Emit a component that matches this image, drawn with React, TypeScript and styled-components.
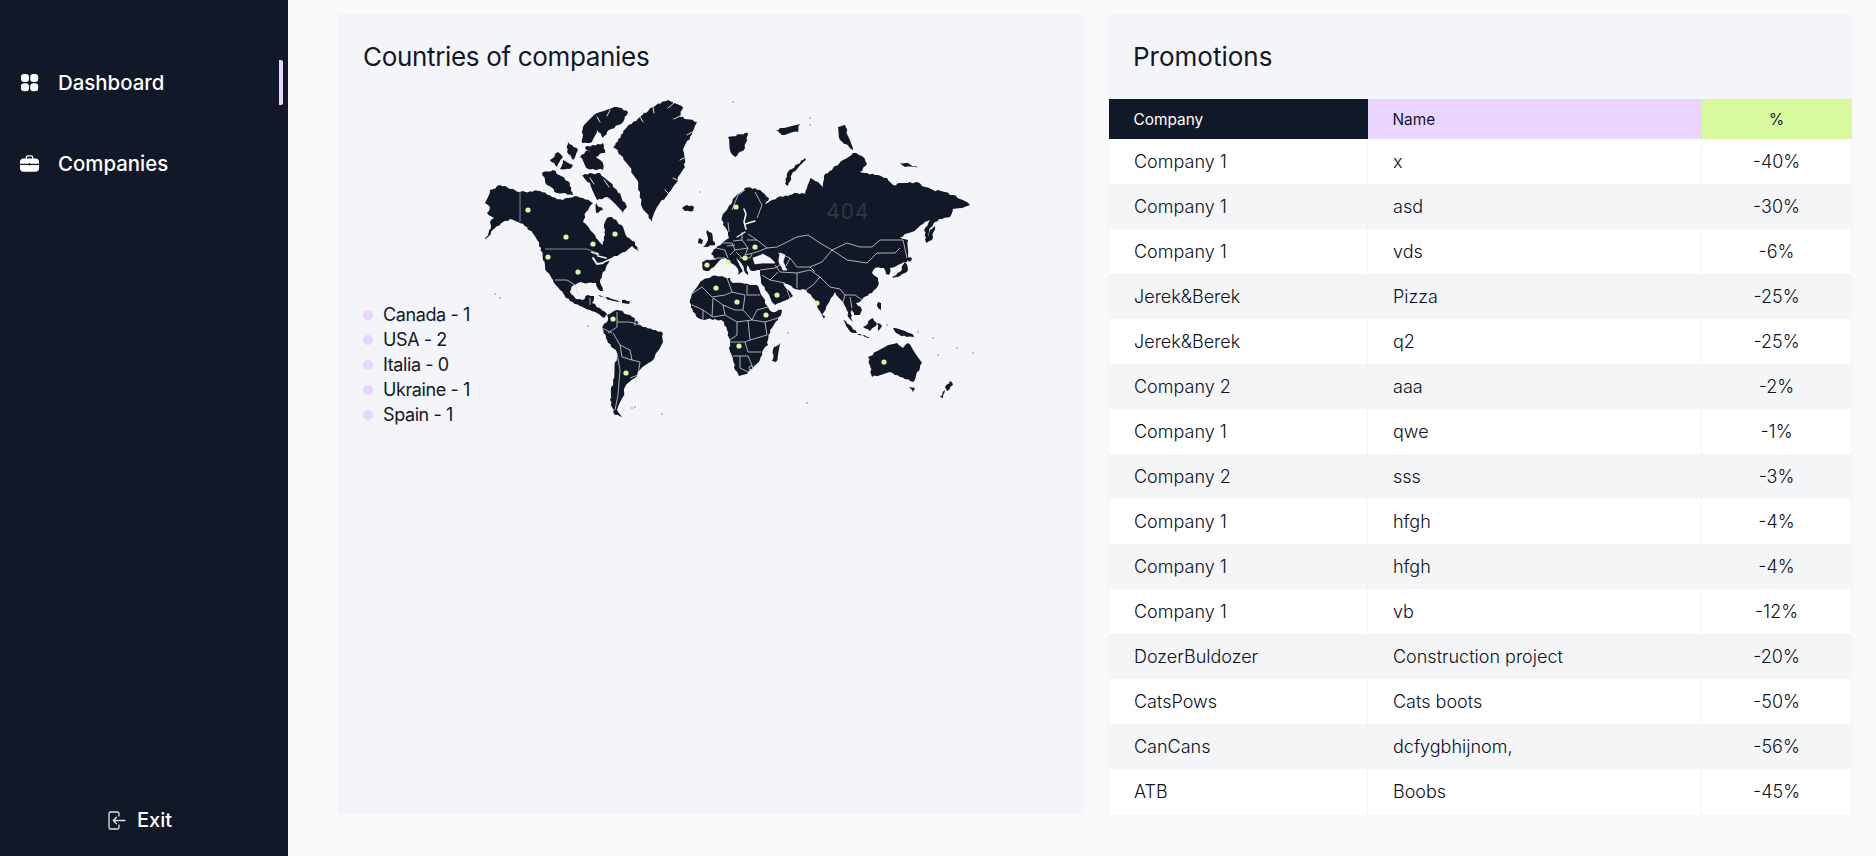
import React from 'react';
import styled, { createGlobalStyle } from 'styled-components';

type Pt = [number, number];

const GlobalStyle = createGlobalStyle`
  html, body { margin: 0; padding: 0; height: 100%; overflow: hidden; background: #fafafb; }
  * { box-sizing: border-box; }
  body { font-family: Inter, "Liberation Sans", sans-serif; color: #111827; }
`;

const Page = styled.div`
  display: flex;
  width: 1876px;
  height: 856px;
`;

const Sidebar = styled.aside`
  width: 288px;
  height: 100%;
  flex-shrink: 0;
  background: #111827;
  color: #fff;
  display: flex;
  flex-direction: column;
  padding: 60px 5px 0 0;
`;

const NavItem = styled.a<{ $active?: boolean }>`
  height: 45px;
  margin-bottom: 36px;
  display: flex;
  align-items: center;
  gap: 19px;
  padding-left: 20px;
  font-size: 20.4px;
  font-weight: 450;
  border-right: 4px solid ${(p) => (p.$active ? '#e9d5ff' : 'transparent')};
  border-radius: 2px;
`;

const ExitLink = styled.a`
  margin-top: auto;
  margin-bottom: 24px;
  padding-left: 108px;
  display: flex;
  align-items: center;
  gap: 11px;
  font-size: 20px;
  font-weight: 450;
`;

const Content = styled.main`
  flex: 1;
  display: grid;
  grid-template-columns: 746px 744px;
  gap: 24px;
  padding: 14px 24px 0 50px;
  height: 814px;
`;

const Card = styled.section`
  background: #f3f5f8;
  min-width: 0;
`;

const Title = styled.h2<{ $tight?: boolean }>`
  margin: 0;
  height: 85px;
  padding: 26px 0 0 25px;
  font-size: 26px;
  line-height: 34px;
  font-weight: 400;
  letter-spacing: ${(p) => (p.$tight ? '-0.33px' : '0')};
  color: #111827;
`;

const MapRow = styled.div`
  display: flex;
  align-items: flex-start;
  padding-left: 25px;
`;

const Legend = styled.ul`
  list-style: none;
  margin: 203px 0 0;
  padding: 0;
  width: 121px;
  flex-shrink: 0;
`;

const LegendItem = styled.li`
  height: 25px;
  display: flex;
  align-items: center;
  gap: 10px;
  font-size: 18px;
  font-weight: 400;
  letter-spacing: -0.4px;
  white-space: nowrap;
  &::before {
    content: '';
    width: 10px;
    height: 10px;
    border-radius: 50%;
    background: #e9d5ff;
  }
`;

const MapSvg = styled.svg`
  width: 500px;
  height: 340px;
  margin-top: -9px;
  flex-shrink: 0;
  overflow: visible;
`;

const Table = styled.table`
  width: 100%;
  border-collapse: collapse;
  table-layout: fixed;
`;

const HeadCell = styled.th<{ $bg: string; $fg: string; $center?: boolean }>`
  height: 40px;
  padding: 0 0 0 ${(p) => (p.$center ? 0 : 25)}px;
  background: ${(p) => p.$bg};
  color: ${(p) => p.$fg};
  font-size: 15.4px;
  font-weight: 400;
  text-align: ${(p) => (p.$center ? 'center' : 'left')};
`;

const Row = styled.tr<{ $alt: boolean }>`
  background: ${(p) => (p.$alt ? '#f3f5f7' : '#fff')};
`;

const Cell = styled.td<{ $center?: boolean }>`
  height: 45px;
  padding: 0 0 0 ${(p) => (p.$center ? 0 : 25)}px;
  font-size: 18px;
  font-weight: 300;
  color: #0b1120;
  border-left: 1px solid #f3f4f6;
  border-right: 1px solid #f3f4f6;
  text-align: ${(p) => (p.$center ? 'center' : 'left')};
`;

const Land = styled.path`
  fill: #111827;
`;

const Water = styled.path`
  fill: #f3f5f8;
  stroke: #f3f5f8;
  stroke-width: 0.8;
`;

const Channel = styled.path<{ $w: number }>`
  fill: none;
  stroke: #f3f5f8;
  stroke-width: ${(p) => p.$w};
  stroke-linecap: round;
  stroke-linejoin: round;
`;

const Border = styled.path<{ $grey?: boolean }>`
  fill: none;
  stroke: ${(p) => (p.$grey ? '#858a94' : '#d3d6dc')};
  stroke-width: ${(p) => (p.$grey ? 1 : 0.8)};
  stroke-linejoin: round;
`;

const Dot = styled.circle`
  fill: #d9f99d;
`;

const Speck = styled.circle`
  fill: #5d6370;
`;

const MapLabel = styled.text`
  fill: #2f3644;
  font-family: Inter, sans-serif;
  font-size: 21px;
  letter-spacing: 1px;
  text-anchor: middle;
`;

// jagged coastline out of a few hand placed points, same result on every render
function rough(points: Pt[], amp = 1): string {
  const out: string[] = [];
  points.forEach((p, i) => {
    const q = points[(i + 1) % points.length];
    out.push(`${p[0].toFixed(1)},${p[1].toFixed(1)}`);
    const dx = q[0] - p[0];
    const dy = q[1] - p[1];
    const len = Math.hypot(dx, dy) || 1;
    const steps = Math.floor(len / 2.4);
    for (let s = 1; s < steps; s++) {
      const t = s / steps;
      const n = Math.sin(p[0] * 12.9 + p[1] * 78.2 + s * 37.7) * 43758.5;
      const off = (n - Math.floor(n) - 0.5) * 2 * amp;
      out.push(`${(p[0] + dx * t - (dy / len) * off).toFixed(1)},${(p[1] + dy * t + (dx / len) * off).toFixed(1)}`);
    }
  });
  return `M${out.join('L')}Z`;
}

const line = (pts: Pt[]) => `M${pts.map((p) => p.join(',')).join('L')}`;

const landmasses: Pt[][] = [
  // north america
  [[485,203],[490,190],[500,185],[520,192],[540,191],[552,197],[563,200],[575,196],[583,198],[593,203],[590,206],[586,212],[583,222],[590,230],[596,238],[603,245],[605,235],[604,225],[607,218],[612,217],[623,227],[627,237],[635,242],[639,252],[632,246],[625,252],[612,258],[607,265],[602,275],[600,282],[603,291],[600,291],[596,283],[588,283],[578,283],[572,286],[570,292],[575,298],[582,300],[588,295],[594,296],[592,303],[600,308],[607,314],[604,318],[597,313],[590,310],[580,306],[570,301],[560,290],[553,280],[547,272],[543,260],[541,248],[536,238],[527,227],[518,222],[510,219],[503,222],[495,228],[485,240],[491,228],[490,222],[494,218],[487,213],[490,207]],
  // south america
  [[607,315],[617,310],[630,315],[643,327],[663,333],[663,342],[657,352],[653,360],[640,370],[635,378],[625,387],[623,397],[617,410],[622,417],[615,415],[610,400],[613,380],[617,353],[607,340],[602,328],[608,320]],
  // greenland
  [[613,147],[627,127],[640,117],[653,107],[668,100],[683,107],[680,117],[697,122],[690,137],[683,150],[685,167],[673,187],[657,207],[652,222],[642,207],[637,180],[623,157]],
  // arctic canada
  [[582,143],[583,127],[597,113],[617,107],[628,112],[623,122],[607,132],[603,138],[597,130],[592,142]],
  [[585,147],[603,143],[605,153],[593,157]],
  [[550,160],[558,152],[563,157],[557,167]],
  [[568,142],[578,150],[573,160],[567,152]],
  [[580,157],[588,150],[603,163],[603,170],[588,169]],
  [[563,160],[573,165],[570,169],[560,169]],
  [[542,173],[553,170],[570,183],[573,195],[557,193],[547,185]],
  [[580,175],[600,173],[617,190],[627,207],[623,213],[607,197],[597,200],[590,183]],
  [[596,203],[603,210],[596,213]],
  // eurasia
  [[703,270],[702,262],[709,260],[716,260],[711,254],[716,248],[722,243],[729,238],[728,232],[723,225],[722,217],[728,208],[735,197],[745,188],[755,188],[762,192],[769,198],[765,204],[772,200],[778,197],[790,195],[797,193],[805,194],[807,188],[810,178],[818,182],[823,187],[824,176],[833,168],[843,160],[853,153],[862,156],[867,164],[860,172],[867,173],[878,175],[887,178],[893,185],[905,183],[917,182],[925,187],[933,190],[945,192],[953,195],[960,199],[970,205],[962,208],[953,209],[950,217],[942,219],[935,222],[930,228],[927,243],[925,240],[925,228],[930,220],[923,224],[912,232],[900,237],[908,240],[908,255],[907,262],[898,265],[890,268],[889,275],[886,274],[884,268],[875,268],[872,273],[878,278],[878,286],[872,293],[863,298],[862,300],[856,303],[862,310],[860,315],[854,315],[852,308],[851,318],[853,322],[849,318],[846,308],[843,302],[838,297],[835,292],[833,296],[828,304],[824,312],[822,317],[819,310],[815,300],[812,297],[806,290],[800,290],[793,288],[787,284],[783,283],[788,290],[793,296],[790,298],[775,305],[773,303],[767,292],[761,283],[760,274],[760,270],[752,271],[750,270],[747,265],[748,275],[744,270],[741,263],[736,258],[741,268],[743,271],[738,275],[738,269],[731,263],[726,258],[719,261],[714,267],[709,271]],
  // africa
  [[690,300],[693,292],[697,287],[703,280],[712,276],[722,276],[730,278],[733,283],[742,283],[750,285],[757,285],[762,296],[768,307],[772,312],[782,310],[778,320],[770,330],[768,340],[768,345],[762,352],[760,360],[753,368],[747,374],[739,376],[735,370],[733,360],[729,348],[730,340],[727,330],[724,322],[715,319],[705,320],[698,318],[693,312]],
  // islands
  [[780,343],[776,362],[772,361],[774,347]],
  [[868,357],[885,347],[897,343],[903,348],[908,343],[922,363],[913,382],[900,377],[890,372],[872,377]],
  [[909,387],[915,388],[913,392]],
  [[950,381],[953,385],[947,391],[945,387]],
  [[945,390],[943,398],[940,397]],
  [[893,328],[905,331],[917,338],[907,337],[896,333]],
  [[843,320],[850,325],[857,333],[853,333],[846,326]],
  [[857,334],[870,337],[868,338]],
  [[863,327],[873,318],[877,325],[870,331]],
  [[877,323],[882,326],[878,331]],
  [[878,302],[881,303],[881,310],[878,308]],
  [[892,278],[900,272],[905,262],[908,270],[900,276]],
  [[907,258],[912,258],[909,262]],
  [[926,243],[930,230],[935,226],[932,240]],
  [[822,315],[825,316],[824,319]],
  [[687,205],[694,207],[693,211],[685,211],[682,208]],
  [[707,230],[712,233],[715,245],[703,247],[708,240]],
  [[699,238],[703,240],[702,244],[698,243]],
  [[728,137],[748,133],[745,148],[735,157],[730,150]],
  [[788,172],[805,158],[806,160],[793,172],[788,186],[785,184]],
  [[838,127],[845,125],[853,150],[840,140]],
  [[900,163],[908,163],[918,168],[905,167]],
  [[775,130],[783,128],[800,124],[798,132],[782,135]],
  [[598,295],[612,299],[620,302],[610,300]],
  [[622,300],[630,301],[629,304],[622,303]],
];

const waters: Pt[][] = [
  [[753,258],[763,254],[770,258],[775,263],[765,263],[755,264]],
  [[780,253],[785,255],[783,262],[787,270],[783,270],[779,262]],
];

const channels: { d: string; w: number }[] = [
  { d: 'M744,209L746,214L744,222L746,229', w: 1.6 },
  { d: 'M745,232L737,237', w: 1.3 },
  { d: 'M745,224L755,221', w: 1.4 },
  { d: 'M592,252L598,254', w: 2 },
  { d: 'M593,258L597,264L603,263', w: 2 },
  { d: 'M598,256L606,258', w: 1.8 },
  { d: 'M604,262L616,257', w: 1.6 },
  // arctic inlets and greenland fjords
  { d: 'M597,117L600,122', w: 0.9 },
  { d: 'M610,110L607,116', w: 0.9 },
  { d: 'M590,178L594,184', w: 0.9 },
  { d: 'M604,180L609,187', w: 0.9 },
  { d: 'M640,117L643,122', w: 0.9 },
  { d: 'M653,107L654,113', w: 0.9 },
  { d: 'M674,103L668,108', w: 0.9 },
  { d: 'M680,116L674,119', w: 0.9 },
  { d: 'M692,132L687,135', w: 0.9 },
  { d: 'M684,158L680,160', w: 0.9 },
  { d: 'M677,180L673,178', w: 0.9 },
  { d: 'M668,193L665,190', w: 0.9 },
];

const greyBorders: Pt[][] = [
  [[545,249],[587,249],[596,253]],
  [[520,192],[520,222]],
];

const borders: Pt[][] = [
  // mexico, central america
  [[555,280],[567,280],[575,285],[578,295]],
  [[590,298],[590,305]],
  // south america
  [[617,312],[617,327],[608,333]],
  [[617,322],[630,322],[640,325]],
  [[613,333],[620,345],[630,350],[632,360]],
  [[617,353],[620,370],[618,395],[615,410]],
  [[632,360],[640,362],[638,375]],
  [[630,378],[638,375],[635,385]],
  [[620,345],[622,357],[632,360]],
  [[602,328],[612,333]],
  [[635,320],[635,326]],
  // africa
  [[690,295],[702,287],[712,297],[725,295],[732,292],[727,278]],
  [[747,285],[747,295],[760,295]],
  [[732,292],[745,295],[743,310],[752,320]],
  [[723,305],[735,310],[743,310]],
  [[713,298],[723,305],[725,315],[713,317]],
  [[692,305],[703,310],[713,317]],
  [[703,310],[703,319]],
  [[713,298],[712,317]],
  [[725,315],[737,322],[752,320],[765,322],[767,335]],
  [[737,322],[737,335],[730,340]],
  [[748,320],[750,340],[767,335]],
  [[730,342],[745,342],[750,340]],
  [[745,342],[748,352],[761,352]],
  [[733,356],[748,356],[753,368]],
  [[740,356],[740,368],[748,372]],
  [[752,320],[757,310],[768,307]],
  [[765,322],[778,318]],
  // asia
  [[747,240],[757,240],[767,248],[777,247],[787,242],[797,237],[808,235],[820,243],[832,250],[847,243],[860,247],[872,247],[880,240],[890,240],[903,240],[907,258]],
  [[832,250],[847,260],[867,263],[877,253],[895,253],[900,248]],
  [[778,253],[790,258],[797,267],[810,267],[822,262],[832,250]],
  [[775,265],[780,272],[797,273],[797,288]],
  [[797,273],[810,270],[820,277]],
  [[820,277],[813,285],[806,290]],
  [[820,277],[830,287],[840,289],[845,295],[843,302]],
  [[845,295],[855,295],[862,300]],
  [[850,297],[852,308]],
  [[762,275],[770,280],[785,283]],
  [[770,280],[778,272]],
  [[790,298],[787,290]],
  [[760,270],[775,268],[780,265]],
  [[790,258],[786,266]],
  [[810,267],[815,272]],
  // europe
  [[709,260],[718,258],[725,258]],
  [[716,248],[725,250],[728,258]],
  [[722,243],[732,243],[735,250],[730,255]],
  [[733,241],[742,240],[748,248],[745,255]],
  [[735,250],[748,248]],
  [[745,255],[757,252],[767,248]],
  [[740,258],[750,258],[752,254]],
  [[748,234],[757,240]],
  [[729,232],[728,222]],
  [[732,210],[738,195],[745,190]],
  [[757,218],[762,205],[755,192]],
  [[736,252],[742,258]],
  [[727,246],[735,245]],
  [[742,240],[742,232]],
];

const dots: Pt[] = [
  [528,210],[566,237],[593,244],[615,234],[548,257],[578,272],[613,319],[626,373],
  [707,265],[728,262],[745,258],[755,247],[736,207],[716,288],[737,302],[766,315],
  [777,295],[817,303],[739,346],[884,362],
];

const specks: Pt[] = [
  [495,294],[500,298],[588,326],[632,408],[635,407],[662,414],[957,348],[973,353],[938,355],
  [807,403],[788,333],[887,325],[918,332],[933,338],[700,192],[733,102],[810,118],[810,125],
];

const promotions = [
  ['Company 1', 'x', '-40%'],
  ['Company 1', 'asd', '-30%'],
  ['Company 1', 'vds', '-6%'],
  ['Jerek&Berek', 'Pizza', '-25%'],
  ['Jerek&Berek', 'q2', '-25%'],
  ['Company 2', 'aaa', '-2%'],
  ['Company 1', 'qwe', '-1%'],
  ['Company 2', 'sss', '-3%'],
  ['Company 1', 'hfgh', '-4%'],
  ['Company 1', 'hfgh', '-4%'],
  ['Company 1', 'vb', '-12%'],
  ['DozerBuldozer', 'Construction project', '-20%'],
  ['CatsPows', 'Cats boots', '-50%'],
  ['CanCans', 'dcfygbhijnom,', '-56%'],
  ['ATB', 'Boobs', '-45%'],
];

const countries = ['Canada - 1', 'USA - 2', 'Italia - 0', 'Ukraine - 1', 'Spain - 1'];

function DashboardIcon() {
  return (
    <svg width="19" height="19" viewBox="0 0 19 19" fill="#fff">
      <rect x="1" y="1" width="8" height="8" rx="3.2" />
      <rect x="10.2" y="1" width="8" height="8" rx="3.2" />
      <rect x="1" y="10.2" width="8" height="8" rx="3.2" />
      <rect x="10.2" y="10.2" width="8" height="8" rx="3.2" />
    </svg>
  );
}

function BriefcaseIcon() {
  return (
    <svg width="19" height="19" viewBox="0 0 19 19" fill="none">
      <path d="M6.3 5V3.6c0-1 .8-1.8 1.8-1.8h2.8c1 0 1.8.8 1.8 1.8V5" stroke="#fff" strokeWidth="1.3" />
      <path d="M0 7.6C0 5.7 1.4 4.4 3.2 4.4h12.6c1.8 0 3.2 1.3 3.2 3.2v2.2H0z" fill="#fff" />
      <path d="M0 11v3.6c0 1.9 1.4 3.2 3.2 3.2h12.6c1.8 0 3.2-1.3 3.2-3.2V11z" fill="#fff" />
      <rect x="8.8" y="9" width="1.4" height="2.6" rx=".7" fill="#111827" />
    </svg>
  );
}

function ExitIcon() {
  return (
    <svg width="18" height="19" viewBox="0 0 18 19" fill="none" stroke="#dfe3ea" strokeWidth="1.3" strokeLinecap="round" strokeLinejoin="round">
      <path d="M11 5V2.6C11 1.7 10.3 1 9.4 1H2.6C1.7 1 1 1.7 1 2.6v13.8c0 .9.7 1.6 1.6 1.6h6.8c.9 0 1.6-.7 1.6-1.6V14" />
      <path d="M17 9.5H5.5M8.5 6.3 5.3 9.5l3.2 3.2" />
    </svg>
  );
}

function WorldMap() {
  return (
    <MapSvg viewBox="484 90 500 340">
      {landmasses.map((pts, i) => (
        <Land key={i} d={rough(pts)} />
      ))}
      {waters.map((pts, i) => (
        <Water key={i} d={rough(pts, 0.3)} />
      ))}
      {channels.map((c, i) => (
        <Channel key={i} d={c.d} $w={c.w} />
      ))}
      {greyBorders.map((pts, i) => (
        <Border key={i} d={line(pts)} $grey />
      ))}
      {borders.map((pts, i) => (
        <Border key={i} d={line(pts)} />
      ))}
      <Border d="M749,368a2,2 0 1,0 4,0a2,2 0 1,0 -4,0" />
      {specks.map(([x, y], i) => (
        <Speck key={i} cx={x} cy={y} r={0.7} />
      ))}
      {dots.map(([x, y], i) => (
        <Dot key={i} cx={x} cy={y} r={2.6} />
      ))}
      <MapLabel x={848} y={219}>404</MapLabel>
    </MapSvg>
  );
}

export default function App() {
  return (
    <Page>
      <GlobalStyle />
      <Sidebar>
        <NavItem $active>
          <DashboardIcon />
          Dashboard
        </NavItem>
        <NavItem>
          <BriefcaseIcon />
          Companies
        </NavItem>
        <ExitLink>
          <ExitIcon />
          Exit
        </ExitLink>
      </Sidebar>
      <Content>
        <Card>
          <Title $tight>Countries of companies</Title>
          <MapRow>
            <Legend>
              {countries.map((c) => (
                <LegendItem key={c}>{c}</LegendItem>
              ))}
            </Legend>
            <WorldMap />
          </MapRow>
        </Card>
        <Card>
          <Title>Promotions</Title>
          <Table>
            <colgroup>
              <col width="259" />
              <col width="334" />
              <col />
            </colgroup>
            <thead>
              <tr>
                <HeadCell $bg="#111827" $fg="#fff">Company</HeadCell>
                <HeadCell $bg="#e9d5ff" $fg="#111827">Name</HeadCell>
                <HeadCell $bg="#d9f99d" $fg="#111827" $center>%</HeadCell>
              </tr>
            </thead>
            <tbody>
              {promotions.map((row, i) => (
                <Row key={i} $alt={i % 2 === 1}>
                  <Cell>{row[0]}</Cell>
                  <Cell>{row[1]}</Cell>
                  <Cell $center>{row[2]}</Cell>
                </Row>
              ))}
            </tbody>
          </Table>
        </Card>
      </Content>
    </Page>
  );
}
